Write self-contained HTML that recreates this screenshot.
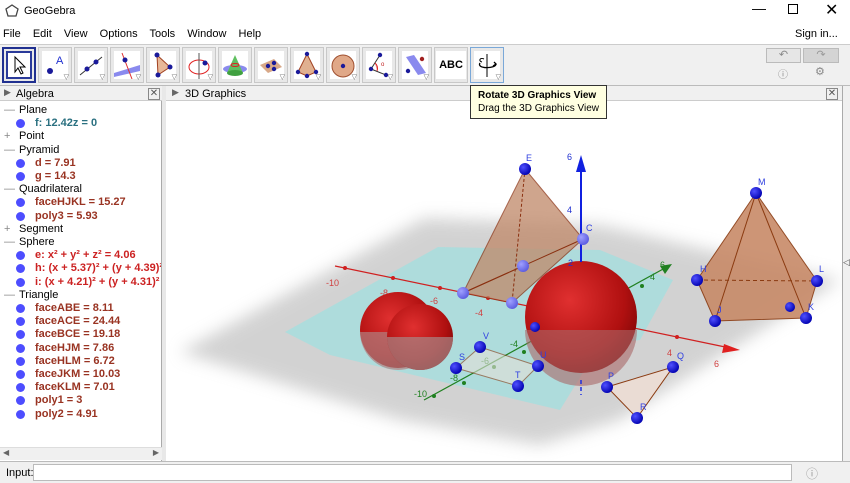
<!DOCTYPE html><html><head><style>
*{margin:0;padding:0;box-sizing:border-box}
body{width:850px;height:483px;overflow:hidden;background:#f0f0f0;font-family:"Liberation Sans",sans-serif;font-size:11px;position:relative;color:#000}
.a{position:absolute}
.btn{position:absolute;top:47px;width:34px;height:36px;border:1px solid #c8c8c8;background:#e8e8e8}
.btn i{position:absolute;left:3px;top:3px;width:26px;height:28px;background:#fff;font-style:normal}
.tri{position:absolute;right:2px;bottom:1px;font-size:7px;color:#666}
.row{position:absolute;left:0;height:13px;line-height:13px;white-space:nowrap}
.hd{left:19px;color:#000}
.it{left:35px;font-weight:bold;color:#993322}
.pm{position:absolute;left:4px;color:#888;font-size:11px}
.dot{position:absolute;left:16px;width:9px;height:9px;border-radius:50%;background:#4d4dff}
</style></head><body>
<div class="a" style="left:0;top:0;width:850px;height:22px;background:#fff"></div>
<svg class="a" style="left:5px;top:4px" width="14" height="13"><polygon points="7,1 13,5 11,12 3,12 1,5" fill="none" stroke="#444" stroke-width="1.3"/></svg>
<div class="a" style="left:24px;top:5px;font-size:11px">GeoGebra</div>
<div class="a" style="left:752px;top:0px;font-size:14px">—</div>
<div class="a" style="left:788px;top:4px;width:10px;height:10px;border:1px solid #000"></div>
<div class="a" style="left:825px;top:0px;font-size:16px">✕</div>
<div class="a" style="left:0;top:22px;width:850px;height:22px;background:#fff"></div>
<div class="a" style="left:3px;top:28px;font-size:11px;word-spacing:3px">File&nbsp; Edit&nbsp; View&nbsp; Options&nbsp; Tools&nbsp; Window&nbsp; Help</div>
<div class="a" style="left:795px;top:28px">Sign in...</div>
<div class="a" style="left:0;top:44px;width:850px;height:1px;background:#ccc"></div>
<div class="btn" style="left:2px;border:2px solid #203090"><i style="border:2px solid #2a3a9a;left:2px;top:2px"><svg width="22" height="24"><path d="M7 4 L7 19 L10 15 L13 21 L15 20 L12 14 L17 14 Z" fill="#fff" stroke="#000"/></svg></i></div>
<div class="btn" style="left:38px"><i><svg width="26" height="28"><circle cx="8" cy="20" r="3" fill="#1a1a9a"/><text x="14" y="13" font-size="11" fill="#2030d0" font-family="Liberation Sans">A</text></svg></i><span class="tri">▽</span></div>
<div class="btn" style="left:74px"><i><svg width="26" height="28"><line x1="2" y1="24" x2="24" y2="6" stroke="#333"/><circle cx="9" cy="18" r="2.5" fill="#1a1a9a"/><circle cx="18" cy="11" r="2.5" fill="#1a1a9a"/></svg></i><span class="tri">▽</span></div>
<div class="btn" style="left:110px"><i><svg width="26" height="28"><polygon points="0,22 26,14 26,20 0,26" fill="#8a8aee"/><line x1="8" y1="2" x2="18" y2="28" stroke="#e03030"/><circle cx="11" cy="9" r="2.5" fill="#1a1a9a"/></svg></i><span class="tri">▽</span></div>
<div class="btn" style="left:146px"><i><svg width="26" height="28"><polygon points="7,4 20,16 8,24" fill="#e8b898" stroke="#a04020"/><circle cx="7" cy="4" r="2.5" fill="#1a1a9a"/><circle cx="20" cy="16" r="2.5" fill="#1a1a9a"/><circle cx="8" cy="24" r="2.5" fill="#1a1a9a"/></svg></i><span class="tri">▽</span></div>
<div class="btn" style="left:182px"><i><svg width="26" height="28"><ellipse cx="13" cy="16" rx="10" ry="7" fill="none" stroke="#e02020"/><line x1="13" y1="2" x2="13" y2="28" stroke="#555"/><circle cx="19" cy="12" r="2.5" fill="#1a1a9a"/></svg></i><span class="tri">▽</span></div>
<div class="btn" style="left:218px"><i><svg width="26" height="28"><ellipse cx="13" cy="18" rx="12" ry="4" fill="#8a8aee"/><polygon points="13,4 5,22 21,22" fill="#60c060"/><ellipse cx="13" cy="22" rx="8" ry="3" fill="#40a040"/><ellipse cx="13" cy="14" rx="4" ry="1.5" fill="none" stroke="#e02020"/></svg></i></div>
<div class="btn" style="left:254px"><i><svg width="26" height="28"><polygon points="2,14 16,8 24,16 10,22" fill="#d8a888"/><circle cx="10" cy="15" r="2.2" fill="#1a1a9a"/><circle cx="16" cy="12" r="2.2" fill="#1a1a9a"/><circle cx="16" cy="18" r="2.2" fill="#1a1a9a"/></svg></i><span class="tri">▽</span></div>
<div class="btn" style="left:290px"><i><svg width="26" height="28"><polygon points="13,3 4,21 13,25 22,21" fill="#e0b090" stroke="#a04020"/><circle cx="13" cy="3" r="2.2" fill="#1a1a9a"/><circle cx="4" cy="21" r="2.2" fill="#1a1a9a"/><circle cx="22" cy="21" r="2.2" fill="#1a1a9a"/><circle cx="13" cy="25" r="2.2" fill="#1a1a9a"/></svg></i><span class="tri">▽</span></div>
<div class="btn" style="left:326px"><i><svg width="26" height="28"><circle cx="13" cy="15" r="11" fill="#e0a888" stroke="#a05030"/><circle cx="13" cy="15" r="2.2" fill="#1a1a9a"/></svg></i><span class="tri">▽</span></div>
<div class="btn" style="left:362px"><i><svg width="26" height="28"><path d="M14 4 L5 18 L20 24" fill="none" stroke="#333"/><path d="M9 12 A7 7 0 0 1 11 20" fill="#f0a0a0" stroke="#e02020"/><circle cx="14" cy="4" r="2.2" fill="#1a1a9a"/><circle cx="5" cy="18" r="2.2" fill="#1a1a9a"/><circle cx="20" cy="24" r="2.2" fill="#1a1a9a"/><text x="15" y="15" font-size="6" fill="#c02020">o</text></svg></i><span class="tri">▽</span></div>
<div class="btn" style="left:398px"><i><svg width="26" height="28"><polygon points="4,6 12,4 24,22 16,24" fill="#8a8aee"/><circle cx="6" cy="20" r="2.2" fill="#1a1a9a"/><circle cx="20" cy="8" r="2.2" fill="#a02020"/></svg></i><span class="tri">▽</span></div>
<div class="btn" style="left:434px"><i style="font-weight:bold;font-size:11px;line-height:28px;text-align:center;left:1px;width:30px">ABC</i></div>
<div class="btn" style="left:470px;border-color:#7aa8d8"><i><svg width="26" height="28"><path d="M13 3 L13 26" stroke="#000"/><path d="M6 12 C2 18 22 18 22 13 M20 11 L22 13 L19 15" fill="none" stroke="#000" stroke-width="1.3"/><path d="M10 8 C6 6 4 10 8 11" fill="none" stroke="#000"/></svg></i><span class="tri">▽</span></div>
<div class="a" style="left:766px;top:48px;width:35px;height:15px;border:1px solid #bbb;background:#e6e6e6;text-align:center;color:#888;line-height:13px">↶</div>
<div class="a" style="left:803px;top:48px;width:36px;height:15px;border:1px solid #bbb;background:#d4d4d4;text-align:center;color:#999;line-height:13px">↷</div>
<div class="a" style="left:778px;top:66px;color:#888;font-size:10px">ⓘ</div>
<div class="a" style="left:815px;top:65px;color:#888;font-size:11px">⚙</div>
<div class="a" style="left:0;top:85px;width:850px;height:1px;background:#bbb"></div>
<div class="a" style="left:0;top:86px;width:162px;height:375px;background:#fff;border-right:1px solid #aaa"></div>
<div class="a" style="left:0;top:86px;width:162px;height:15px;background:#f0f0f0;border-bottom:1px solid #ccc"></div>
<div class="a" style="left:4px;top:87px;font-size:9px;color:#666">▶</div>
<div class="a" style="left:16px;top:88px">Algebra</div>
<div class="a" style="left:148px;top:88px;width:12px;height:12px;border:1px solid #888;font-size:10px;line-height:10px;text-align:center;color:#555">✕</div>
<div class="a" style="left:162px;top:86px;width:4px;height:375px;background:#e8e8e8"></div>
<div id="alg" class="a" style="left:0;top:0;width:161px;height:447px;overflow:hidden"></div>
<div class="a" style="left:0;top:447px;width:162px;height:13px;background:#f0f0f0;border-top:1px solid #ddd"><span style="position:absolute;left:3px;top:0;font-size:8px;color:#666">◀</span><span style="position:absolute;right:3px;top:0;font-size:8px;color:#666">▶</span></div>
<div class="a" style="left:166px;top:86px;width:676px;height:15px;background:#f0f0f0;border-bottom:1px solid #ccc"></div>
<div class="a" style="left:172px;top:87px;font-size:9px;color:#666">▶</div>
<div class="a" style="left:185px;top:88px">3D Graphics</div>
<div class="a" style="left:826px;top:88px;width:12px;height:12px;border:1px solid #888;font-size:10px;line-height:10px;text-align:center;color:#555">✕</div>
<div class="a" style="left:842px;top:86px;width:8px;height:375px;background:#f0f0f0;border-left:1px solid #aaa"></div>
<div class="a" style="left:843px;top:257px;font-size:9px;color:#555">◁</div>
<svg class="a" style="left:166px;top:101px" width="676" height="360" viewBox="166 101 676 360">
<defs>
<radialGradient id="rs" cx="0.4" cy="0.35" r="0.7"><stop offset="0" stop-color="#e03030"/><stop offset="0.7" stop-color="#b01010"/><stop offset="1" stop-color="#800808"/></radialGradient>
<radialGradient id="bd" cx="0.35" cy="0.35" r="0.7"><stop offset="0" stop-color="#5050ff"/><stop offset="1" stop-color="#0000b0"/></radialGradient>
<radialGradient id="ld" cx="0.35" cy="0.35" r="0.7"><stop offset="0" stop-color="#a0a0ff"/><stop offset="1" stop-color="#5a5ae0"/></radialGradient>
<filter id="bl"><feGaussianBlur stdDeviation="8"/></filter>
</defs>
<rect x="166" y="101" width="676" height="360" fill="#fff"/>
<polygon points="180,352 425,218 600,225 760,262 840,280 620,420 540,445 400,420" fill="#c8c8c8" filter="url(#bl)" opacity="0.8"/>
<polygon points="285,332 438,247 600,250 673,280 640,340 600,345 560,410 330,355" fill="#a8dede" opacity="0.85"/>
<line x1="335" y1="266" x2="730" y2="348" stroke="#d02020" stroke-width="1.2"/>
<polygon points="740,350 724,344 722,353" fill="#e02020"/>
<line x1="424" y1="400" x2="665" y2="268" stroke="#208020" stroke-width="1.2"/>
<polygon points="672,264 660,266 665,274" fill="#208020"/>
<g fill="#d02020"><circle cx="345" cy="268" r="2"/><circle cx="393" cy="278" r="2"/><circle cx="440" cy="288" r="2"/><circle cx="488" cy="298" r="2"/><circle cx="677" cy="337" r="2"/></g>
<g fill="#208020"><circle cx="434" cy="396" r="2"/><circle cx="464" cy="383" r="2"/><circle cx="494" cy="367" r="2"/><circle cx="524" cy="352" r="2"/><circle cx="552" cy="336" r="2"/><circle cx="642" cy="286" r="2"/></g>
<g font-family="Liberation Sans" font-size="9" fill="#d04040"><text x="326" y="286">-10</text><text x="380" y="296">-8</text><text x="430" y="304">-6</text><text x="475" y="316">-4</text><text x="667" y="356">4</text><text x="714" y="367">6</text></g>
<g font-family="Liberation Sans" font-size="9" fill="#208020"><text x="414" y="397">-10</text><text x="450" y="381">-8</text><text x="481" y="364">-6</text><text x="510" y="347">-4</text><text x="650" y="280">4</text><text x="660" y="268">6</text></g>
<ellipse cx="398" cy="330" rx="38" ry="38" fill="url(#rs)"/>
<path d="M360,332 A38 38 0 0 0 436,332 Z" fill="#b08080" opacity="0.7"/>
<ellipse cx="420" cy="337" rx="33" ry="33" fill="url(#rs)"/>
<path d="M387,337 A33 33 0 0 0 453,337 Z" fill="#a88888" opacity="0.7"/>
<circle cx="581" cy="317" r="56" fill="url(#rs)"/>
<path d="M525,330 A56 56 0 0 0 637,330 Z" fill="#a86868" opacity="0.6"/>
<line x1="581" y1="380" x2="581" y2="395" stroke="#2030e0" stroke-width="1.5" stroke-dasharray="4,3"/>
<line x1="581" y1="262" x2="581" y2="168" stroke="#1020e0" stroke-width="2"/>
<polygon points="581,155 576,172 586,172" fill="#1020e0"/>
<g font-family="Liberation Sans" font-size="9" fill="#2030d0"><text x="567" y="160">6</text><text x="567" y="213">4</text><text x="568" y="266">2</text></g>
<polygon points="525,169 583,239 512,303 463,293" fill="#c08868" opacity="0.75" stroke="#8a3010"/>
<line x1="463" y1="293" x2="583" y2="239" stroke="#8a3010"/>
<line x1="525" y1="169" x2="512" y2="303" stroke="#8a3010" stroke-dasharray="3,2"/>
<line x1="523" y1="266" x2="463" y2="293" stroke="#8a3010"/>
<polygon points="756,193 697,280 715,321 806,318 817,281" fill="#c88a68" opacity="0.9" stroke="#8a3a10"/>
<line x1="756" y1="193" x2="715" y2="321" stroke="#8a3a10"/><line x1="756" y1="193" x2="806" y2="318" stroke="#8a3a10"/>
<line x1="697" y1="280" x2="817" y2="281" stroke="#8a3a10" stroke-dasharray="4,3"/>
<polygon points="607,387 673,367 637,418" fill="#eadcd4" stroke="#8a3a10"/>
<polygon points="456,368 480,347 538,366 518,386" fill="#e4e0d8" opacity="0.6" stroke="#8a3a10"/>
<g fill="url(#bd)"><circle cx="525" cy="169" r="6"/><circle cx="756" cy="193" r="6"/><circle cx="697" cy="280" r="6"/><circle cx="817" cy="281" r="6"/><circle cx="715" cy="321" r="6"/><circle cx="806" cy="318" r="6"/><circle cx="790" cy="307" r="5"/><circle cx="607" cy="387" r="6"/><circle cx="673" cy="367" r="6"/><circle cx="637" cy="418" r="6"/><circle cx="456" cy="368" r="6"/><circle cx="480" cy="347" r="6"/><circle cx="538" cy="366" r="6"/><circle cx="518" cy="386" r="6"/><circle cx="535" cy="327" r="5"/></g>
<g fill="url(#ld)"><circle cx="583" cy="239" r="6"/><circle cx="463" cy="293" r="6"/><circle cx="512" cy="303" r="6"/><circle cx="523" cy="266" r="6"/></g>
<g font-family="Liberation Sans" font-size="9" fill="#3040e0"><text x="526" y="161">E</text><text x="586" y="231">C</text><text x="758" y="185">M</text><text x="700" y="272">H</text><text x="819" y="272">L</text><text x="808" y="310">K</text><text x="717" y="313">J</text><text x="608" y="379">P</text><text x="677" y="359">Q</text><text x="640" y="410">R</text><text x="459" y="360">S</text><text x="483" y="339">V</text><text x="540" y="358">U</text><text x="515" y="378">T</text></g>
</svg>
<div class="a" style="left:470px;top:85px;width:137px;height:34px;background:#ffffe1;border:1px solid #333;padding:3px 7px;font-size:10px;line-height:13px"><b>Rotate 3D Graphics View</b><br>Drag the 3D Graphics View</div>
<div class="a" style="left:0;top:461px;width:850px;height:22px;background:#f0f0f0;border-top:1px solid #bbb"></div>
<div class="a" style="left:6px;top:467px">Input:</div>
<div class="a" style="left:33px;top:464px;width:759px;height:17px;background:#fff;border:1px solid #bbb"></div>
<div class="a" style="left:806px;top:465px;color:#999;font-size:12px">ⓘ</div>
<script>
var r=[["h","Plane","-"],["c","f: 12.42z = 0","#2a7080"],["h","Point","+"],["h","Pyramid","-"],["c","d = 7.91"],["c","g = 14.3"],["h","Quadrilateral","-"],["c","faceHJKL = 15.27"],["c","poly3 = 5.93"],["h","Segment","+"],["h","Sphere","-"],["c","e: x² + y² + z² = 4.06","#cc2222"],["c","h: (x + 5.37)² + (y + 4.39)² + z","#cc2222"],["c","i: (x + 4.21)² + (y + 4.31)² + z²","#cc2222"],["h","Triangle","-"],["c","faceABE = 8.11"],["c","faceACE = 24.44"],["c","faceBCE = 19.18"],["c","faceHJM = 7.86"],["c","faceHLM = 6.72"],["c","faceJKM = 10.03"],["c","faceKLM = 7.01"],["c","poly1 = 3"],["c","poly2 = 4.91"]];
var h="";r.forEach(function(x,i){var t=104+i*13.2;
if(x[0]=="h"){h+='<div class="pm" style="top:'+(t)+'px">'+(x[2]=="-"?"—":"+")+'</div><div class="row hd" style="top:'+t+'px">'+x[1]+'</div>';}
else{h+='<div class="dot" style="top:'+(t+2)+'px"></div><div class="row it" style="top:'+t+'px;'+(x[2]?'color:'+x[2]:'')+'">'+x[1]+'</div>';}});
document.getElementById("alg").innerHTML=h;
</script>
</body></html>
